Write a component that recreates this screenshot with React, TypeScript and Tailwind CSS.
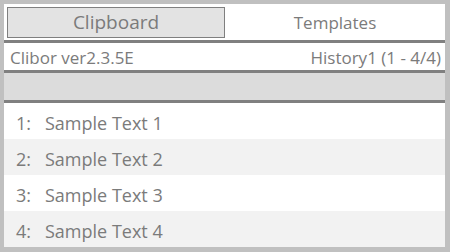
import React from "react";

const font = { fontFamily: '"Open Sans", "Noto Sans", sans-serif' };

export default function App() {
  const rows = ["Sample Text 1", "Sample Text 2", "Sample Text 3", "Sample Text 4"];
  return (
    <div className="w-[450px] h-[252px] bg-[#c0c0c0] pl-[4px] pt-[4px] pr-[5px] pb-[5px]" style={font}>
      <div className="w-full h-full bg-white flex flex-col text-[#7b7b7b]">
        <div className="h-[36px] flex items-stretch pt-[3px] pb-[2px] pl-[3px]">
          <div className="w-[218px] border border-[#7f7f7f] bg-[#e3e3e3] flex items-center justify-center text-[19px] leading-none">
            Clipboard
          </div>
          <div className="flex-1 flex items-center justify-center text-[17px] leading-none">
            Templates
          </div>
        </div>
        <div className="h-[3px] bg-[#808080]" />
        <div className="h-[27px] flex items-center justify-between pl-[6px] pr-[4px] pt-[1px] text-[17px] leading-none">
          <span>Clibor ver2.3.5E</span>
          <span>History1 (1 - 4/4)</span>
        </div>
        <div className="h-[3px] bg-[#808080]" />
        <div className="h-[27px] bg-[#dcdcdc]" />
        <div className="h-[3px] bg-[#808080]" />
        <div className="flex flex-col">
          {rows.map((t, i) => (
            <div
              key={i}
              className={`h-[36px] flex items-center pt-[3px] text-[18px] leading-none ${i % 2 === 1 ? "bg-[#f2f2f2]" : "bg-white"}`}
            >
              <span className="w-[41px] pl-[12px]">{i + 1}:</span>
              <span>{t}</span>
            </div>
          ))}
        </div>
      </div>
    </div>
  );
}
